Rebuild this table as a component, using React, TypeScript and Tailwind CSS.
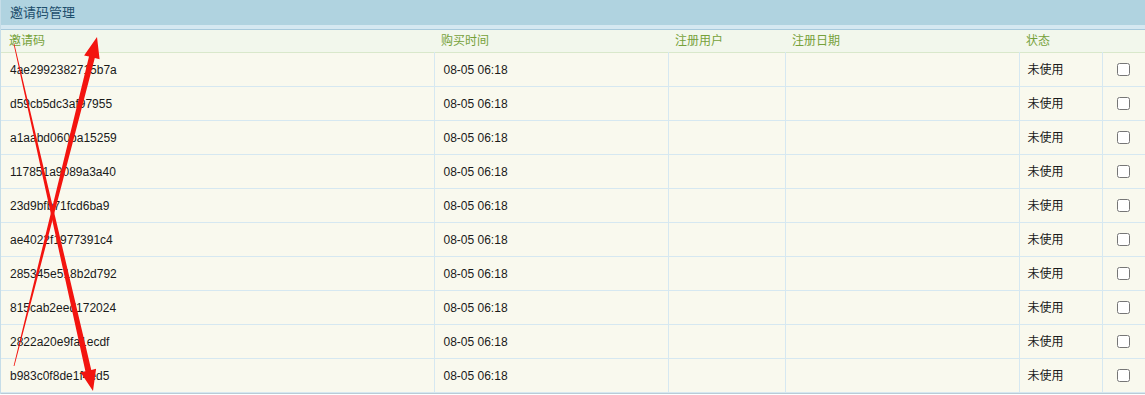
const rows = [
  "4ae2992382715b7a",
  "d59cb5dc3af97955",
  "a1aabd060ba15259",
  "117851a9089a3a40",
  "23d9bfb71fcd6ba9",
  "ae4022f1977391c4",
  "285345e518b2d792",
  "815cab2eed172024",
  "2822a20e9fa1ecdf",
  "b983c0f8de1f4ed5",
];

// tapered annotation arrow: thin at the tail, thick at the head
function arrowPoints(tx: number, ty: number, hx: number, hy: number) {
  const len = Math.hypot(hx - tx, hy - ty);
  const ux = (hx - tx) / len;
  const uy = (hy - ty) / len;
  const nx = -uy;
  const ny = ux;
  const headLen = 21;
  const headW = 8;
  const shaftW = 3;
  const tailW = 0.4;
  const bx = hx - ux * headLen;
  const by = hy - uy * headLen;
  const pts = [
    [tx + nx * tailW, ty + ny * tailW],
    [bx + nx * shaftW, by + ny * shaftW],
    [bx + nx * headW, by + ny * headW],
    [hx, hy],
    [bx - nx * headW, by - ny * headW],
    [bx - nx * shaftW, by - ny * shaftW],
    [tx - nx * tailW, ty - ny * tailW],
  ];
  return pts.map((p) => p.map((v) => v.toFixed(1)).join(",")).join(" ");
}

export default function App() {
  return (
    <div className="relative h-[395px] w-[1145px] overflow-hidden bg-white font-['Liberation_Sans','Noto_Sans_CJK_SC',sans-serif] text-[12px] text-[#1a1a1a]">
      <div className="border-l border-[#c6dde8]">
        <div className="flex h-[25px] items-center bg-[#b0d3e0] pl-[9px] text-[13px] text-[#1d4e6c]">邀请码管理</div>
        <div className="h-[4px] bg-[#d5e8f1]" />
        <div className="h-px bg-[#a7c9dc]" />
        <table className="w-full table-fixed border-collapse">
          <colgroup>
            <col className="w-[433px]" />
            <col className="w-[234px]" />
            <col className="w-[117px]" />
            <col className="w-[234px]" />
            <col className="w-[83px]" />
            <col />
          </colgroup>
          <thead>
            <tr className="h-[22px] border-b border-[#d9e8cb] bg-[#f2f7ec] text-left text-[#76a13a]">
              <th className="pl-[8px] font-normal">邀请码</th>
              <th className="pl-[7px] font-normal">购买时间</th>
              <th className="pl-[7px] font-normal">注册用户</th>
              <th className="pl-[7px] font-normal">注册日期</th>
              <th className="pl-[7px] font-normal">状态</th>
              <th />
            </tr>
          </thead>
          <tbody className="bg-[#f9f9ee]">
            {rows.map((code) => (
              <tr key={code} className="h-[34px] border-b border-[#d6e8f1]">
                <td className="pl-[9px] pt-[2px]">{code}</td>
                <td className="border-l border-[#d6e8f1] pl-[9px] pt-[2px]">08-05 06:18</td>
                <td className="border-l border-[#d6e8f1]" />
                <td className="border-l border-[#d6e8f1]" />
                <td className="border-l border-[#d6e8f1] pl-[8px] pt-[2px]">未使用</td>
                <td className="border-l border-[#d6e8f1]">
                  <div className="flex justify-center">
                    <input type="checkbox" className="m-0 h-[13px] w-[13px] accent-white" />
                  </div>
                </td>
              </tr>
            ))}
          </tbody>
        </table>
        <div className="h-px bg-[#b9ccd6]" />
      </div>
      <svg className="pointer-events-none absolute left-0 top-0" width="1145" height="395">
        <polygon points={arrowPoints(14, 366, 97, 37)} fill="#f3140f" />
        <polygon points={arrowPoints(14, 44, 93, 391)} fill="#f3140f" />
      </svg>
    </div>
  );
}
